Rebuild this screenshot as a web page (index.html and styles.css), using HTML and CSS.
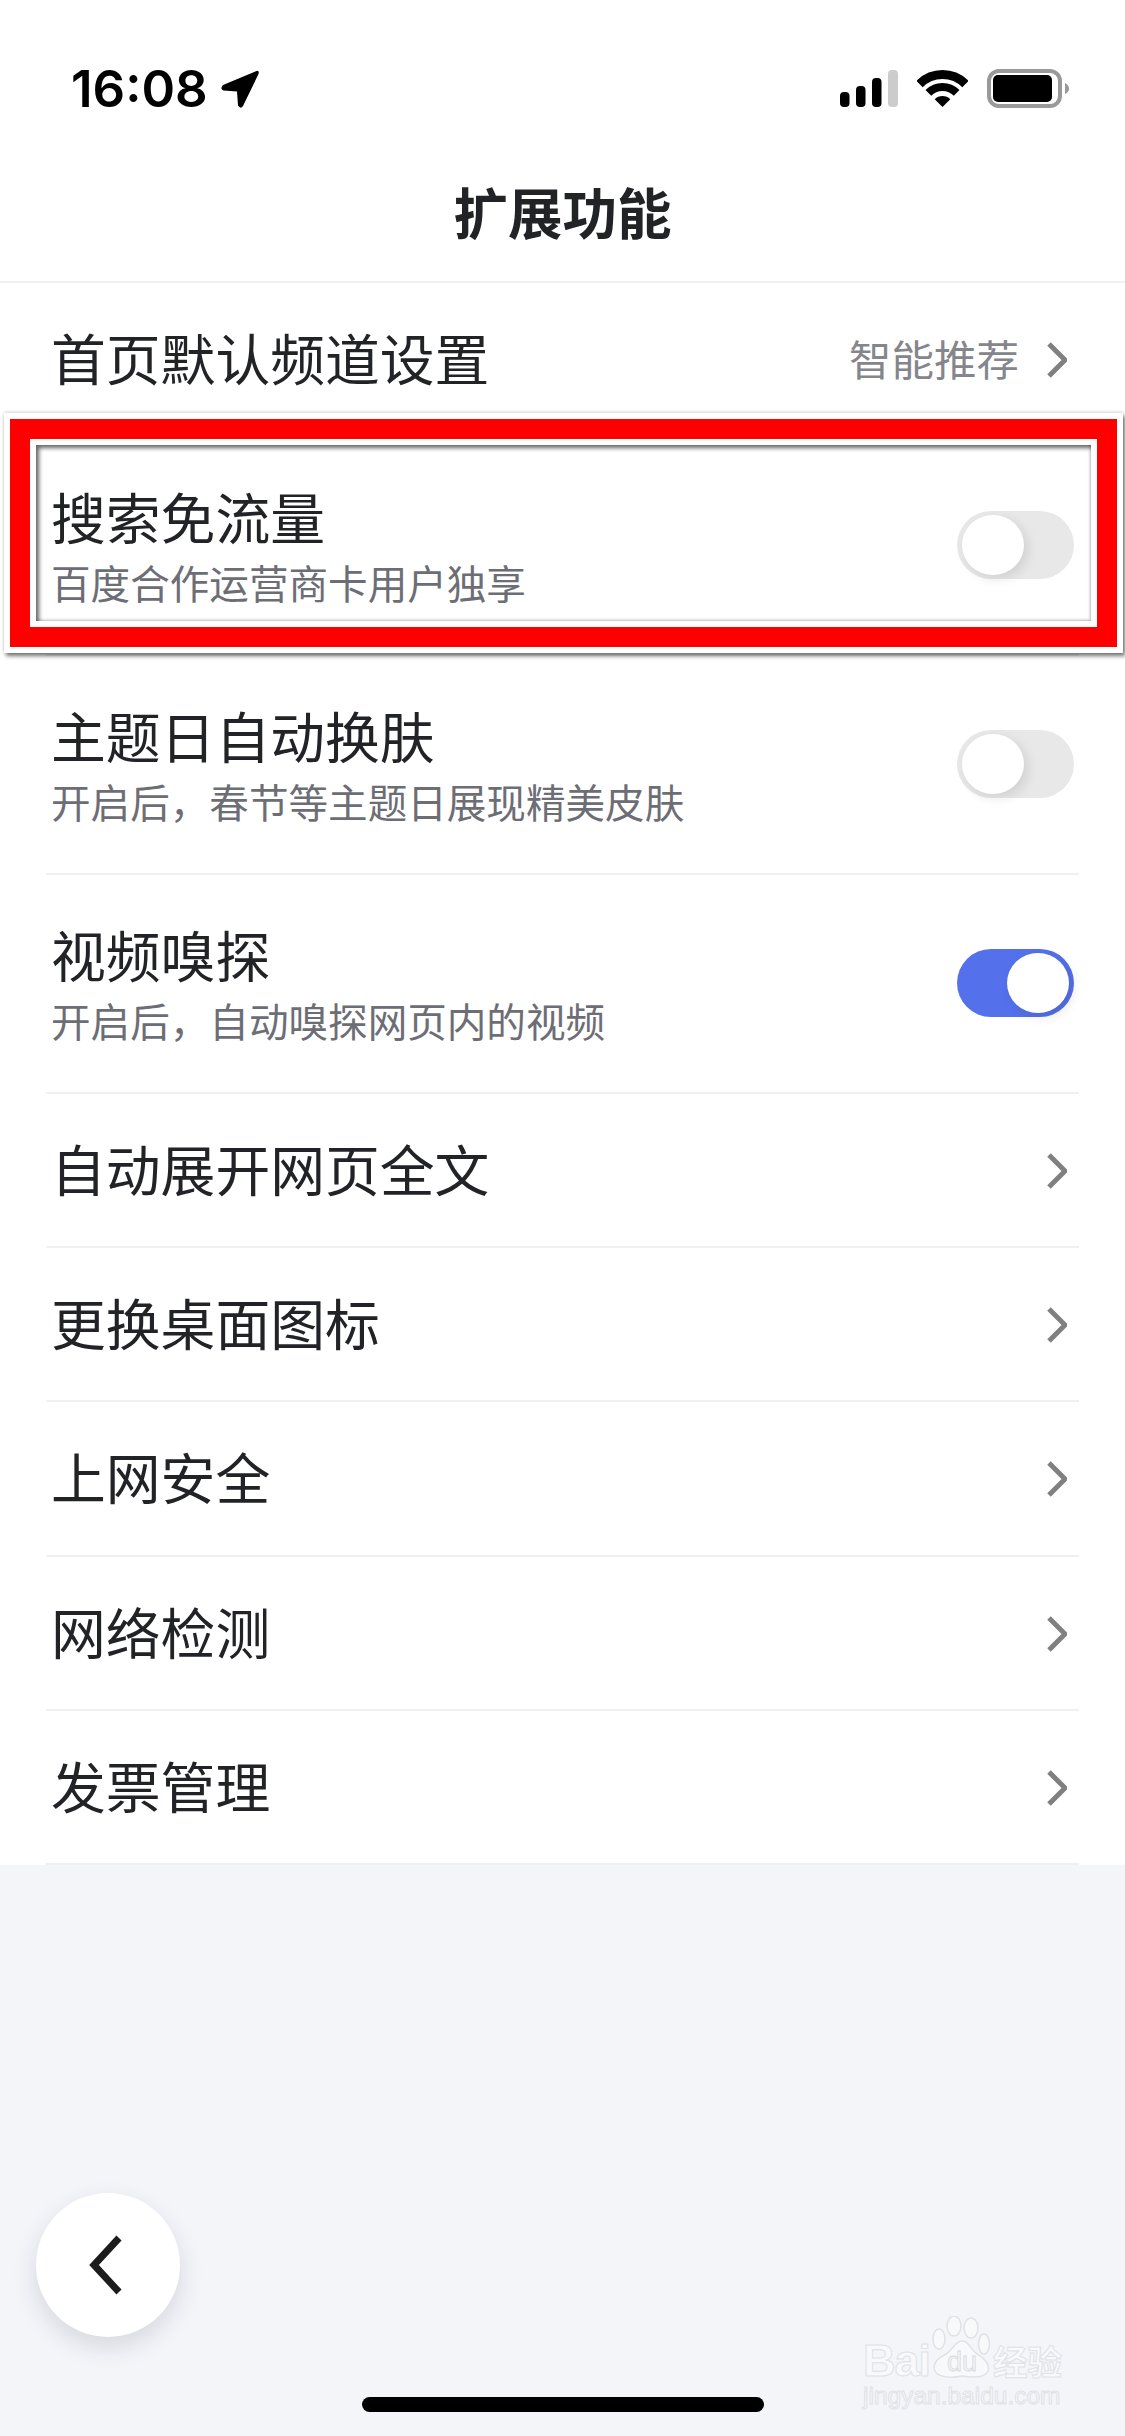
FILE: index.html
```html
<!DOCTYPE html>
<html lang="zh-CN">
<head>
    <meta charset="UTF-8">
    <meta name="viewport" content="width=device-width, initial-scale=1.0">
    <title>扩展功能</title>
    <link rel="stylesheet" href="styles.css">
</head>
<body>
    <div class="page">
        <!-- Status bar -->
        <div class="status">
            <span class="time">16:08</span>
            <svg class="icon-location" viewBox="0 0 38 38">
                <path d="M35.5 1 L2 15 Q-1.5 19 2.5 20.5 L16 21.5 L17 35.5 Q19.5 39.5 22 36 L37.5 4 Q38.5 0 35.5 1 Z"/>
            </svg>
            <div class="status-icons">
                <svg class="icon-signal" viewBox="0 0 58 37">
                    <rect x="0" y="22" width="9.5" height="15" rx="4"/>
                    <rect x="16" y="16" width="9.5" height="21" rx="4"/>
                    <rect x="32" y="8" width="9.5" height="29" rx="4"/>
                    <rect class="bar-off" x="48" y="0" width="10" height="37" rx="4"/>
                </svg>
                <svg class="icon-wifi" viewBox="0 0 51 37">
                    <path class="wifi-arc wifi-outer" d="M2.52 14.02 A32.5 32.5 0 0 1 48.48 14.02"/>
                    <path class="wifi-arc wifi-mid" d="M11.36 22.86 A20 20 0 0 1 39.64 22.86"/>
                    <path d="M25.5 37 L17.7 29.2 A11 11 0 0 1 33.3 29.2 Z"/>
                </svg>
                <svg class="icon-battery" viewBox="0 0 82 39">
                    <rect class="battery-shell" x="2" y="2" width="71" height="35" rx="10"/>
                    <rect x="6" y="6" width="59" height="27" rx="5"/>
                    <path class="battery-cap" d="M78 14 Q82 16 82 19.5 Q82 23 78 25 Z"/>
                </svg>
            </div>
        </div>

        <div class="nav">扩展功能</div>

        <div class="list">
            <div class="row row-first">
                <div class="row-inner">
                    <span class="row-title">首页默认频道设置</span>
                    <div class="row-right">
                        <span class="row-value">智能推荐</span>
                        <svg class="chevron" viewBox="0 0 20 36"><path d="M2 2 L18 18 L2 34"/></svg>
                    </div>
                </div>
            </div>

            <div class="row row-tall">
                <div class="row-inner">
                    <div>
                        <div class="row-title">搜索免流量</div>
                        <div class="row-sub">百度合作运营商卡用户独享</div>
                    </div>
                    <div class="toggle"><span class="knob"></span></div>
                </div>
            </div>

            <div class="row row-tall">
                <div class="row-inner">
                    <div>
                        <div class="row-title">主题日自动换肤</div>
                        <div class="row-sub">开启后，春节等主题日展现精美皮肤</div>
                    </div>
                    <div class="toggle"><span class="knob"></span></div>
                </div>
            </div>

            <div class="row row-tall">
                <div class="row-inner">
                    <div>
                        <div class="row-title">视频嗅探</div>
                        <div class="row-sub">开启后，自动嗅探网页内的视频</div>
                    </div>
                    <div class="toggle toggle-on"><span class="knob"></span></div>
                </div>
            </div>

            <div class="row">
                <div class="row-inner">
                    <span class="row-title">自动展开网页全文</span>
                    <svg class="chevron" viewBox="0 0 20 36"><path d="M2 2 L18 18 L2 34"/></svg>
                </div>
            </div>
            <div class="row">
                <div class="row-inner">
                    <span class="row-title">更换桌面图标</span>
                    <svg class="chevron" viewBox="0 0 20 36"><path d="M2 2 L18 18 L2 34"/></svg>
                </div>
            </div>
            <div class="row">
                <div class="row-inner">
                    <span class="row-title">上网安全</span>
                    <svg class="chevron" viewBox="0 0 20 36"><path d="M2 2 L18 18 L2 34"/></svg>
                </div>
            </div>
            <div class="row">
                <div class="row-inner">
                    <span class="row-title">网络检测</span>
                    <svg class="chevron" viewBox="0 0 20 36"><path d="M2 2 L18 18 L2 34"/></svg>
                </div>
            </div>
            <div class="row">
                <div class="row-inner">
                    <span class="row-title">发票管理</span>
                    <svg class="chevron" viewBox="0 0 20 36"><path d="M2 2 L18 18 L2 34"/></svg>
                </div>
            </div>
        </div>

        <!-- Red annotation frame drawn over the second row -->
        <div class="mark"><div class="mark-red"><div class="mark-inner"></div></div></div>

        <!-- Floating back button -->
        <div class="back">
            <svg class="back-icon" viewBox="0 0 36 62"><path d="M31 4 L6 31 L31 58"/></svg>
        </div>

        <div class="home-bar"></div>

        <!-- Watermark -->
        <div class="watermark">
            <div class="wm-logo">
                <span class="wm-bai">Bai</span>
                <svg class="wm-paw" viewBox="0 0 58 62">
                    <ellipse cx="7" cy="23" rx="6" ry="10"/>
                    <ellipse cx="22" cy="10" rx="7" ry="10"/>
                    <ellipse cx="39" cy="12" rx="7" ry="10"/>
                    <ellipse cx="52" cy="28" rx="5.5" ry="10"/>
                    <path d="M30 25 C37 25 38 33 45 38 C54 43 58 50 56 55 C53 62 42 62 30 60 C20 62 7 62 3 55 C0 48 6 42 14 38 C21 34 23 25 30 25 Z"/>
                    <text class="wm-du" x="30" y="55">du</text>
                </svg>
                <span class="wm-jy">经验</span>
            </div>
            <div class="wm-url">jingyan.baidu.com</div>
        </div>
    </div>
</body>
</html>
```

FILE: styles.css
```css
* {
    box-sizing: border-box;
}

body {
    margin: 0;
    font-family: "Noto Sans CJK SC", "Noto Sans", sans-serif;
    background-color: #f4f5f9;
    color: #222327;
}

.page {
    position: relative;
    width: 1125px;
    height: 2436px;
    overflow: hidden;
}

/* Status bar */
.status {
    display: flex;
    align-items: flex-start;
    height: 150px;
    padding: 70px 56px 0 71px;
    background-color: #fff;
}

.time {
    font-family: Inter, "Liberation Sans", sans-serif;
    font-size: 51px;
    font-weight: 600;
    line-height: 38px;
    color: #000;
}

.icon-location {
    width: 38px;
    height: 38px;
    margin-left: 13px;
}

.status-icons {
    display: flex;
    align-items: flex-start;
    gap: 19px;
    margin-left: auto;
}

.icon-signal {
    width: 58px;
    height: 37px;
}

.bar-off {
    fill: #cccccc;
}

.icon-wifi {
    width: 51px;
    height: 37px;
}

.wifi-arc {
    fill: none;
    stroke: #000;
}

.wifi-outer {
    stroke-width: 9;
}

.wifi-mid {
    stroke-width: 8;
}

.icon-battery {
    width: 82px;
    height: 39px;
    margin-top: -1px;
}

.battery-shell {
    fill: none;
    stroke: #999;
    stroke-width: 4;
}

.battery-cap {
    fill: #999;
}

/* Title */
.nav {
    display: flex;
    align-items: center;
    justify-content: center;
    height: 133px;
    padding-bottom: 10px;
    font-size: 54.5px;
    font-weight: 700;
    background-color: #fff;
    border-bottom: 2px solid #f0f0f2;
}

/* List */
.list {
    background-color: #fff;
}

.row {
    height: 154.4px;
    padding: 0 46px;
}

.row-first {
    height: 153.5px;
}

.row-tall {
    height: 219px;
}

.row-inner {
    display: flex;
    align-items: center;
    justify-content: space-between;
    height: 100%;
    padding: 0 5px;
    border-bottom: 2px solid #f0f0f2;
}

.row-title {
    padding-bottom: 6px;
    font-size: 54.8px;
    line-height: 70px;
}

.row-sub {
    padding-bottom: 3px;
    font-size: 39.6px;
    line-height: 52px;
    color: #6d6e75;
}

.row-right {
    display: flex;
    align-items: center;
}

.row-value {
    margin-right: 28px;
    padding-bottom: 3px;
    font-size: 42.5px;
    color: #85868c;
}

.chevron {
    width: 20px;
    height: 36px;
    margin: 2px 7px 0 0;
}

.chevron path {
    fill: none;
    stroke: #808080;
    stroke-width: 5;
}

/* Toggle */
.toggle {
    display: flex;
    align-items: center;
    width: 117px;
    height: 68px;
    padding: 0 5px;
    background-color: #e8e8e8;
    border-radius: 34px;
}

.knob {
    width: 62px;
    height: 60px;
    background-color: #fff;
    border-radius: 50%;
    box-shadow: 4px 4px 12px rgba(0, 0, 0, 0.1);
}

.toggle-on {
    justify-content: flex-end;
    background-color: #5470eb;
}

/* Annotation frame */
.mark {
    position: absolute;
    top: 413px;
    left: 4px;
    width: 1119px;
    height: 240px;
    border: 6px solid #fff;
    box-shadow: 2px 3px 4px rgba(0, 0, 0, 0.55), 0 -1px 3px rgba(0, 0, 0, 0.15);
}

.mark-red {
    height: 100%;
    border: 20px solid #f00;
}

.mark-inner {
    height: 100%;
    border: 6px solid #fff;
    box-shadow: inset 3px 3px 4px rgba(0, 0, 0, 0.6), inset -1px -1px 3px rgba(0, 0, 0, 0.25);
}

/* Back button */
.back {
    position: absolute;
    top: 2193px;
    left: 36px;
    display: flex;
    align-items: center;
    justify-content: center;
    width: 144px;
    height: 144px;
    background-color: #fff;
    border-radius: 50%;
    box-shadow: 0 10px 24px rgba(40, 45, 70, 0.14);
}

.back-icon {
    width: 36px;
    height: 62px;
    margin-left: -4px;
}

.back-icon path {
    fill: none;
    stroke: #1c1c1c;
    stroke-width: 7;
}

.home-bar {
    position: absolute;
    top: 2397px;
    left: 362px;
    width: 402px;
    height: 15px;
    background-color: #000;
    border-radius: 8px;
}

/* Watermark */
.watermark {
    position: absolute;
    top: 2316px;
    left: 863px;
    width: 204px;
}

.wm-logo {
    display: flex;
    align-items: flex-end;
    height: 62px;
}

.wm-bai {
    width: 69px;
    font-family: "Liberation Sans", sans-serif;
    font-size: 45px;
    font-weight: 700;
    letter-spacing: -1px;
    line-height: 34px;
    color: #f8f9fb;
    -webkit-text-stroke: 1px #e0e1e6;
}

.wm-paw {
    flex-shrink: 0;
    width: 58px;
    height: 62px;
}

.wm-paw ellipse,
.wm-paw path {
    fill: #f8f9fb;
    stroke: #e0e1e6;
    stroke-width: 1.5;
}

.wm-du {
    font-family: "Liberation Sans", sans-serif;
    font-size: 27px;
    text-anchor: middle;
    fill: #f4f5f9;
    stroke: #d8d9de;
    stroke-width: 0.8;
}

.wm-jy {
    margin: 0 0 1px 3px;
    font-size: 34.5px;
    font-weight: 700;
    line-height: 34px;
    white-space: nowrap;
    color: #f8f9fb;
    -webkit-text-stroke: 1px #e0e1e6;
}

.wm-url {
    margin-top: 6px;
    font-family: "Liberation Sans", sans-serif;
    font-size: 24.5px;
    line-height: 24px;
    color: #f8f9fb;
    -webkit-text-stroke: 1px #e0e1e6;
}
```
